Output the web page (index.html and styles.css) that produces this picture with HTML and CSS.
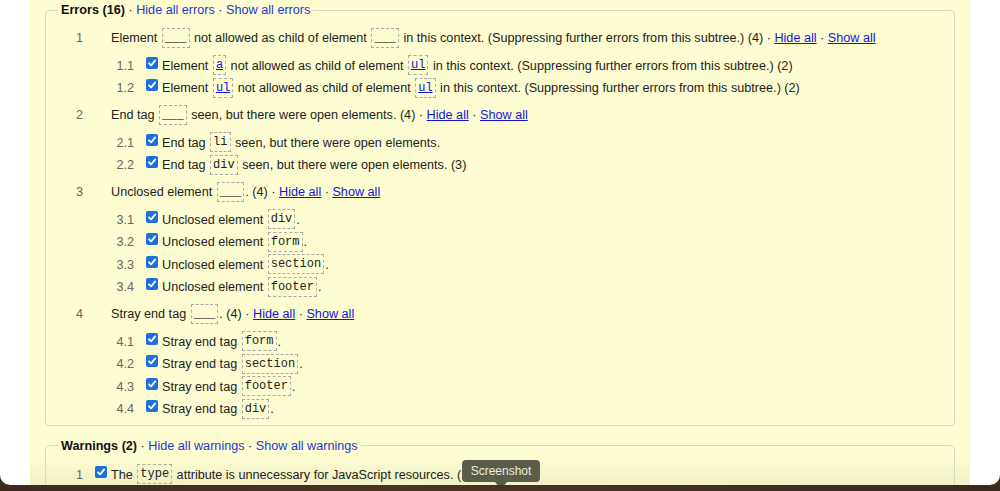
FILE: index.html
```html
<!DOCTYPE html>
<html>
<head>
<meta charset="utf-8">
<link rel="stylesheet" href="styles.css">
</head>
<body>
<div class="window">
  <div class="page">
    <fieldset class="group">
      <legend><b>Errors (16)</b> · <a class="lg">Hide all errors</a> · <a class="lg">Show all errors</a></legend>
      <div class="row top"><span class="num">1</span><span class="msg">Element <code class="blank">___</code> not allowed as child of element <code class="blank">___</code> in this context. (Suppressing further errors from this subtree.) (4) · <a>Hide all</a> · <a>Show all</a></span></div>
      <div class="row sub"><span class="num">1.1</span><span class="cb"></span><span class="msg">Element <code><a>a</a></code> not allowed as child of element <code><a>ul</a></code> in this context. (Suppressing further errors from this subtree.) (2)</span></div>
      <div class="row sub"><span class="num">1.2</span><span class="cb"></span><span class="msg">Element <code><a>ul</a></code> not allowed as child of element <code><a>ul</a></code> in this context. (Suppressing further errors from this subtree.) (2)</span></div>

      <div class="row top"><span class="num">2</span><span class="msg">End tag <code class="blank">___</code> seen, but there were open elements. (4) · <a>Hide all</a> · <a>Show all</a></span></div>
      <div class="row sub"><span class="num">2.1</span><span class="cb"></span><span class="msg">End tag <code>li</code> seen, but there were open elements.</span></div>
      <div class="row sub"><span class="num">2.2</span><span class="cb"></span><span class="msg">End tag <code>div</code> seen, but there were open elements. (3)</span></div>

      <div class="row top"><span class="num">3</span><span class="msg">Unclosed element <code class="blank">___</code>. (4) · <a>Hide all</a> · <a>Show all</a></span></div>
      <div class="row sub"><span class="num">3.1</span><span class="cb"></span><span class="msg">Unclosed element <code>div</code>.</span></div>
      <div class="row sub"><span class="num">3.2</span><span class="cb"></span><span class="msg">Unclosed element <code>form</code>.</span></div>
      <div class="row sub"><span class="num">3.3</span><span class="cb"></span><span class="msg">Unclosed element <code>section</code>.</span></div>
      <div class="row sub"><span class="num">3.4</span><span class="cb"></span><span class="msg">Unclosed element <code>footer</code>.</span></div>

      <div class="row top"><span class="num">4</span><span class="msg">Stray end tag <code class="blank">___</code>. (4) · <a>Hide all</a> · <a>Show all</a></span></div>
      <div class="row sub"><span class="num">4.1</span><span class="cb"></span><span class="msg">Stray end tag <code>form</code>.</span></div>
      <div class="row sub"><span class="num">4.2</span><span class="cb"></span><span class="msg">Stray end tag <code>section</code>.</span></div>
      <div class="row sub"><span class="num">4.3</span><span class="cb"></span><span class="msg">Stray end tag <code>footer</code>.</span></div>
      <div class="row sub"><span class="num">4.4</span><span class="cb"></span><span class="msg">Stray end tag <code>div</code>.</span></div>
    </fieldset>

    <fieldset class="group warn">
      <legend><b>Warnings (2)</b> · <a class="lg">Hide all warnings</a> · <a class="lg">Show all warnings</a></legend>
      <div class="row wrow"><span class="num">1</span><span class="cb"></span><span class="msg">The <code>type</code> attribute is unnecessary for JavaScript resources. (2)</span></div>
    </fieldset>

    <div class="tip">Screenshot</div>
  </div>
</div>
<div class="desk"></div>
</body>
</html>
```

FILE: styles.css
```css
html, body {
  margin: 0;
  padding: 0;
  height: 491px;
  overflow: hidden;
}
body {
  background: #3b2a1c;
  font-family: "Liberation Sans", Arial, sans-serif;
  font-size: 12.65px;
  color: #222;
}
.window {
  height: 485px;
  background: #fff;
  border-radius: 0 0 10px 10px;
  overflow: hidden;
}
.page {
  position: relative;
  margin: 0 30px;
  height: 485px;
  background: linear-gradient(#fdfdd1 94%, #f1f1c6);
  padding-top: 2px;
  box-sizing: border-box;
}
.group {
  margin: 0 15px;
  padding: 6px 12px 4px;
  border: 1px solid #d9d9c4;
  border-radius: 4px;
  min-width: 0;
}
.group legend {
  padding: 0 3px;
  line-height: 16px;
  color: #111;
}
.group legend b {
  font-weight: bold;
}
a {
  color: #1414e0;
  text-decoration: underline;
}
a.lg {
  color: #2536d4;
  text-decoration: none;
}
.row {
  display: flex;
  align-items: center;
  height: 22.5px;
  white-space: nowrap;
}
.row.top {
  margin: 4.5px 0 5px;
}
.row.top:first-of-type {
  margin-top: 3px;
}
.num {
  color: #666;
  text-align: right;
  flex: none;
}
.top .num {
  width: 25px;
  margin-right: 28px;
}
.sub .num {
  width: 76px;
  margin-right: 12px;
}
.wrow .num {
  width: 25px;
  margin-right: 12px;
}
.cb {
  flex: none;
  width: 12px;
  height: 12px;
  border-radius: 2px;
  background: #1d6fe0 url("data:image/svg+xml;utf8,<svg xmlns='http://www.w3.org/2000/svg' viewBox='0 0 12 12'><path d='M3 6.3 L5.1 8.4 L9.2 3.4' fill='none' stroke='white' stroke-width='1.8' stroke-linecap='round' stroke-linejoin='round'/></svg>") center/12px 12px no-repeat;
  margin-right: 4px;
  position: relative;
  top: -3px;
}
.msg {
  line-height: 20px;
}
code {
  font-family: "Liberation Mono", "Courier New", monospace;
  font-size: 12px;
  display: inline-block;
  line-height: 16px;
  padding: 1px 2px;
  border: 1px dashed #aaa;
  vertical-align: middle;
  margin: -2px 1px 0;
}
code.blank {
  color: #222;
  padding: 1px 2px;
}
.warn {
  margin-top: 12px;
  padding-bottom: 20px;
}
.wrow {
  margin-top: 4px;
}
.tip {
  position: absolute;
  left: 432px;
  top: 460px;
  width: 78px;
  height: 22px;
  box-sizing: border-box;
  background: #5b5c49;
  color: #ecece4;
  border-radius: 4px;
  font-size: 12px;
  line-height: 22px;
  text-align: center;
  font-family: "Liberation Sans", Arial, sans-serif;
}
.tip::after {
  content: "";
  position: absolute;
  left: 33px;
  top: 22px;
  border-left: 6px solid transparent;
  border-right: 6px solid transparent;
  border-top: 7px solid #5b5c49;
}
.desk {
  height: 6px;
  background: linear-gradient(90deg, #3b2a1c, #4a3522 40%, #3a2a1e);
}
```
